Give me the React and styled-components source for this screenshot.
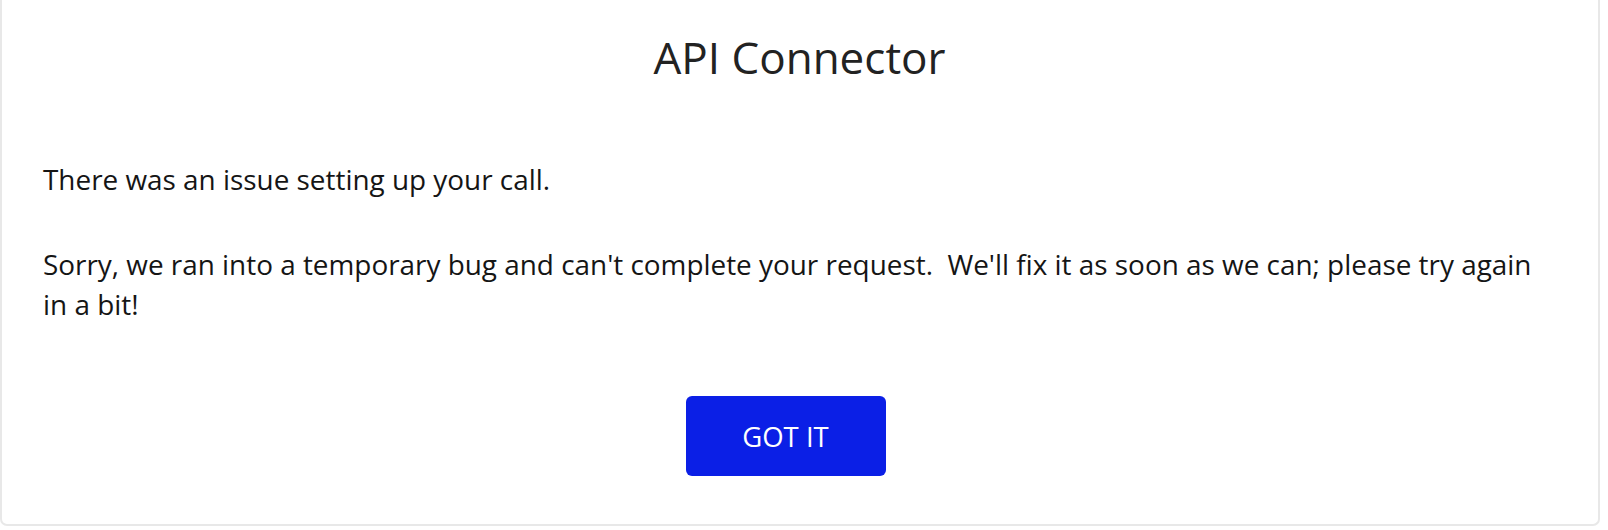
import React from "react";
import styled, { createGlobalStyle } from "styled-components";

const Global = createGlobalStyle`
    html, body {
        margin: 0;
        padding: 0;
        background: #ffffff;
    }
    body {
        font-family: "Open Sans", "Liberation Sans", sans-serif;
    }
`

const Page = styled.div`
    width: 1608px;
    height: 530px;
    overflow: hidden;
    display: flex;
    align-items: flex-start;
`
const Modal = styled.div`
    box-sizing: border-box;
    width: 1600px;
    height: 526px;
    background: #ffffff;
    border: 2px solid #e8e8e8;
    border-top: none;
    border-radius: 0 0 7px 7px;
    padding: 27px 42px 0 41px;
    display: flex;
    flex-direction: column;
`
const Title = styled.h1`
    margin: 0;
    font-size: 44px;
    font-weight: 400;
    line-height: 60px;
    color: #222222;
    text-align: center;
`
const Body = styled.div`
    margin-top: 72px;
    font-size: 27.9px;
    line-height: 40px;
    color: #151515;
`
const Para = styled.p`
    margin: 0 0 45px 0;
    white-space: pre-wrap;
    &:last-child {
        margin-bottom: 0;
    }
`
const Footer = styled.div`
    display: flex;
    justify-content: center;
    padding-right: 28px;
    margin-top: 72px;
`
const Button = styled.button`
    width: 200px;
    height: 80px;
    border: none;
    border-radius: 6px;
    background: #0b1fe6;
    color: #ffffff;
    font-family: "Open Sans", "Liberation Sans", sans-serif;
    font-size: 27.5px;
    font-weight: 400;
    cursor: pointer;
`

const App = () => {
    return (
        <Page>
            <Global />
            <Modal>
                <Title>API Connector</Title>
                <Body>
                    <Para>There was an issue setting up your call.</Para>
                    <Para>{"Sorry, we ran into a temporary bug and can't complete your request.  We'll fix it as soon as we can; please try again in a bit!"}</Para>
                </Body>
                <Footer>
                    <Button>GOT IT</Button>
                </Footer>
            </Modal>
        </Page>
    )
}

export default App;
